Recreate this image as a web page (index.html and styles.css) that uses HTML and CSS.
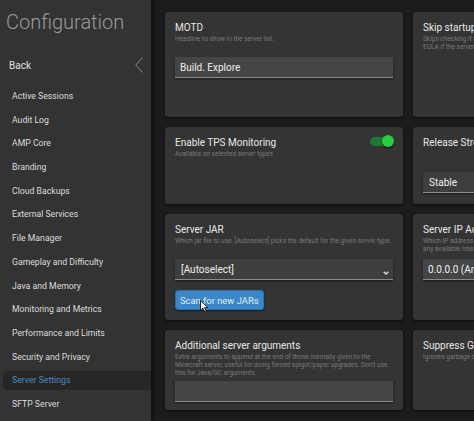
FILE: index.html
```html
<!DOCTYPE html>
<html lang="en">
<head>
  <meta charset="UTF-8" />
  <meta name="viewport" content="width=device-width, initial-scale=1.0"/>
  <title>Configuration</title>

  <link rel="stylesheet" href="styles.css">
</head>
<body>

  <div class="app">
    <!-- Left navigation -->
    <aside class="sidebar">
      <h1 class="sidebar-title">Configuration</h1>
      <div class="back">
        <span>Back</span>
        <svg width="8" height="16" viewBox="0 0 8 16"><path d="M7.5 0.5 L0.8 8 L7.5 15.5" fill="none" stroke="#8a8a8a" stroke-width="1"/></svg>
      </div>
      <ul class="nav">
        <li>Active Sessions</li>
        <li>Audit Log</li>
        <li>AMP Core</li>
        <li>Branding</li>
        <li>Cloud Backups</li>
        <li>External Services</li>
        <li>File Manager</li>
        <li>Gameplay and Difficulty</li>
        <li>Java and Memory</li>
        <li>Monitoring and Metrics</li>
        <li>Performance and Limits</li>
        <li>Security and Privacy</li>
        <li class="active">Server Settings</li>
        <li>SFTP Server</li>
      </ul>
    </aside>

    <!-- Settings cards -->
    <main class="settings">
      <div class="grid">
        <section class="card">
          <h2 class="card-title">MOTD</h2>
          <p class="card-desc">Headline to show in the server list.</p>
          <input class="field" type="text" value="Build. Explore">
        </section>

        <section class="card">
          <div class="card-head">
            <h2 class="card-title">Skip startup EULA check</h2>
            <span class="toggle off"></span>
          </div>
          <p class="card-desc">Skips checking if the user has accepted the Minecraft<br>EULA if the server has already been set up before.</p>
        </section>

        <section class="card">
          <div class="card-head">
            <h2 class="card-title">Enable TPS Monitoring</h2>
            <span class="toggle"></span>
          </div>
          <p class="card-desc">Available on selected server types</p>
        </section>

        <section class="card">
          <h2 class="card-title">Release Stream</h2>
          <p class="card-desc"></p>
          <div class="select-wrap">
            <select class="field">
              <option>Stable</option>
              <option>Snapshot</option>
            </select>
            <svg class="chevron" width="6" height="4" viewBox="0 0 6 4"><path d="M0.7 0.7 L3 3 L5.3 0.7" fill="none" stroke="#ddd" stroke-width="1.4"/></svg>
          </div>
        </section>

        <section class="card">
          <h2 class="card-title">Server JAR</h2>
          <p class="card-desc">Which jar file to use. [Autoselect] picks the default for the given server type.</p>
          <div class="select-wrap">
            <select class="field">
              <option>[Autoselect]</option>
            </select>
            <svg class="chevron" width="6" height="4" viewBox="0 0 6 4"><path d="M0.7 0.7 L3 3 L5.3 0.7" fill="none" stroke="#ddd" stroke-width="1.4"/></svg>
          </div>
          <button class="btn">Scan for new JARs</button>
        </section>

        <section class="card">
          <h2 class="card-title">Server IP Address</h2>
          <p class="card-desc">Which IP address the server should listen on. Use 0.0.0.0 to bind to<br>any available interface on this machine.</p>
          <input class="field" type="text" value="0.0.0.0 (Any)">
        </section>

        <section class="card">
          <h2 class="card-title">Additional server arguments</h2>
          <p class="card-desc">Extra arguments to append at the end of those normally given to the Minecraft server, useful for doing forced spigot/paper upgrades. Don't use this for Java/GC arguments.</p>
          <input class="field" type="text" value="">
        </section>

        <section class="card">
          <div class="card-head">
            <h2 class="card-title">Suppress GC warnings</h2>
            <span class="toggle off"></span>
          </div>
          <p class="card-desc">Ignores garbage collection warnings in the console.</p>
        </section>
      </div>
    </main>
  </div>

  <!-- mouse pointer over the scan button -->
  <svg class="cursor" width="9" height="13" viewBox="0 0 9 13">
    <path d="M0.5 0.5 L0.5 10.5 L3 8.2 L4.8 12 L6.3 11.3 L4.6 7.6 L7.8 7.6 Z" fill="#fff" stroke="#111" stroke-width="0.9" stroke-linejoin="round"/>
  </svg>

</body>
</html>
```

FILE: styles.css
```css
body {
  font-family: Roboto, 'Noto Sans', sans-serif;
  background: #1c1c1c;
  color: #e6e6e6;
  margin: 0;
  padding: 0;
  overflow: hidden;
}

.app {
  display: flex;
  height: 100vh;
}

/* sidebar */

.sidebar {
  width: 151px;
  flex-shrink: 0;
  background: #333333;
  box-shadow: 2px 0 4px rgba(0, 0, 0, 0.6);
  position: relative;
  z-index: 1;
}

.sidebar-title {
  margin: 0;
  padding: 12px 0 0 6px;
  font-size: 20px;
  line-height: 20px;
  font-weight: 300;
  color: #9a9a9a;
}

.back {
  display: flex;
  justify-content: space-between;
  align-items: center;
  height: 24px;
  margin-top: 21px;
  padding: 0 8px 0 9px;
  font-size: 10px;
  color: #e0e0e0;
}

.back svg {
  display: block;
}

.nav {
  list-style: none;
  margin: 10px 0 0;
  padding: 0;
}

.nav li {
  height: 19px;
  line-height: 19px;
  margin: 0 0 4.7px 3px;
  padding-left: 9px;
  font-size: 8.7px;
  color: #dcdcdc;
  white-space: nowrap;
  border-radius: 5px 0 0 5px;
}

.nav li.active {
  background: #262626;
  color: #4d8bc2;
}

/* settings area */

.settings {
  flex: 1;
  overflow: hidden;
  padding: 12px 0 0 14px;
}

.grid {
  display: grid;
  grid-template-columns: 238px 238px;
  grid-template-rows: 105px 77px 106px 80px;
  gap: 10px;
}

.card {
  background: #343434;
  border-radius: 3px;
  box-shadow: 0 1px 3px rgba(0, 0, 0, 0.7);
  padding: 10px;
  box-sizing: border-box;
  overflow: hidden;
}

.card-head {
  display: flex;
  justify-content: space-between;
  align-items: center;
}

.card-title {
  margin: 0;
  font-size: 10px;
  line-height: 11px;
  font-weight: 400;
  color: #e8e8e8;
  white-space: nowrap;
}

.card-desc {
  margin: 2px 0 0;
  min-height: 18px;
  font-size: 6.5px;
  line-height: 8px;
  color: #7a7a7a;
}

.field {
  display: block;
  width: 100%;
  height: 21px;
  margin-top: 4px;
  box-sizing: border-box;
  border: none;
  border-bottom: 1px solid #8c8c8c;
  border-radius: 0;
  background: #454545;
  box-shadow: 0 1px 2px rgba(0, 0, 0, 0.5);
  color: #eeeeee;
  font-family: Roboto, 'Noto Sans', sans-serif;
  font-size: 10px;
  padding: 0 5px;
  outline: none;
}

select.field {
  appearance: none;
  -webkit-appearance: none;
  background: #3e3e3e;
  padding-left: 6px;
}

.select-wrap {
  position: relative;
}

.chevron {
  position: absolute;
  right: 4px;
  top: 12px;
}

.btn {
  display: block;
  margin-top: 10px;
  height: 20px;
  padding: 0 4px;
  border: 1px solid #2d6ea8;
  border-radius: 3px;
  background: #3a87c9;
  color: #e4edf5;
  font-family: Roboto, 'Noto Sans', sans-serif;
  font-size: 9.4px;
  box-shadow: 0 1px 2px rgba(0, 0, 0, 0.5);
}

.toggle {
  position: relative;
  flex-shrink: 0;
  width: 22px;
  height: 9px;
  margin: -3px 1px 0 0;
  border-radius: 5px;
  background: #1d7a30;
}

.toggle::after {
  content: '';
  position: absolute;
  right: -2px;
  top: -1.5px;
  width: 12px;
  height: 12px;
  border-radius: 50%;
  background: #2bcb43;
  box-shadow: 0 1px 2px rgba(0, 0, 0, 0.6);
}

.toggle.off {
  background: #555;
}

.toggle.off::after {
  right: auto;
  left: -2px;
  background: #bbb;
}

.cursor {
  position: absolute;
  left: 200px;
  top: 300px;
  z-index: 2;
}
```
